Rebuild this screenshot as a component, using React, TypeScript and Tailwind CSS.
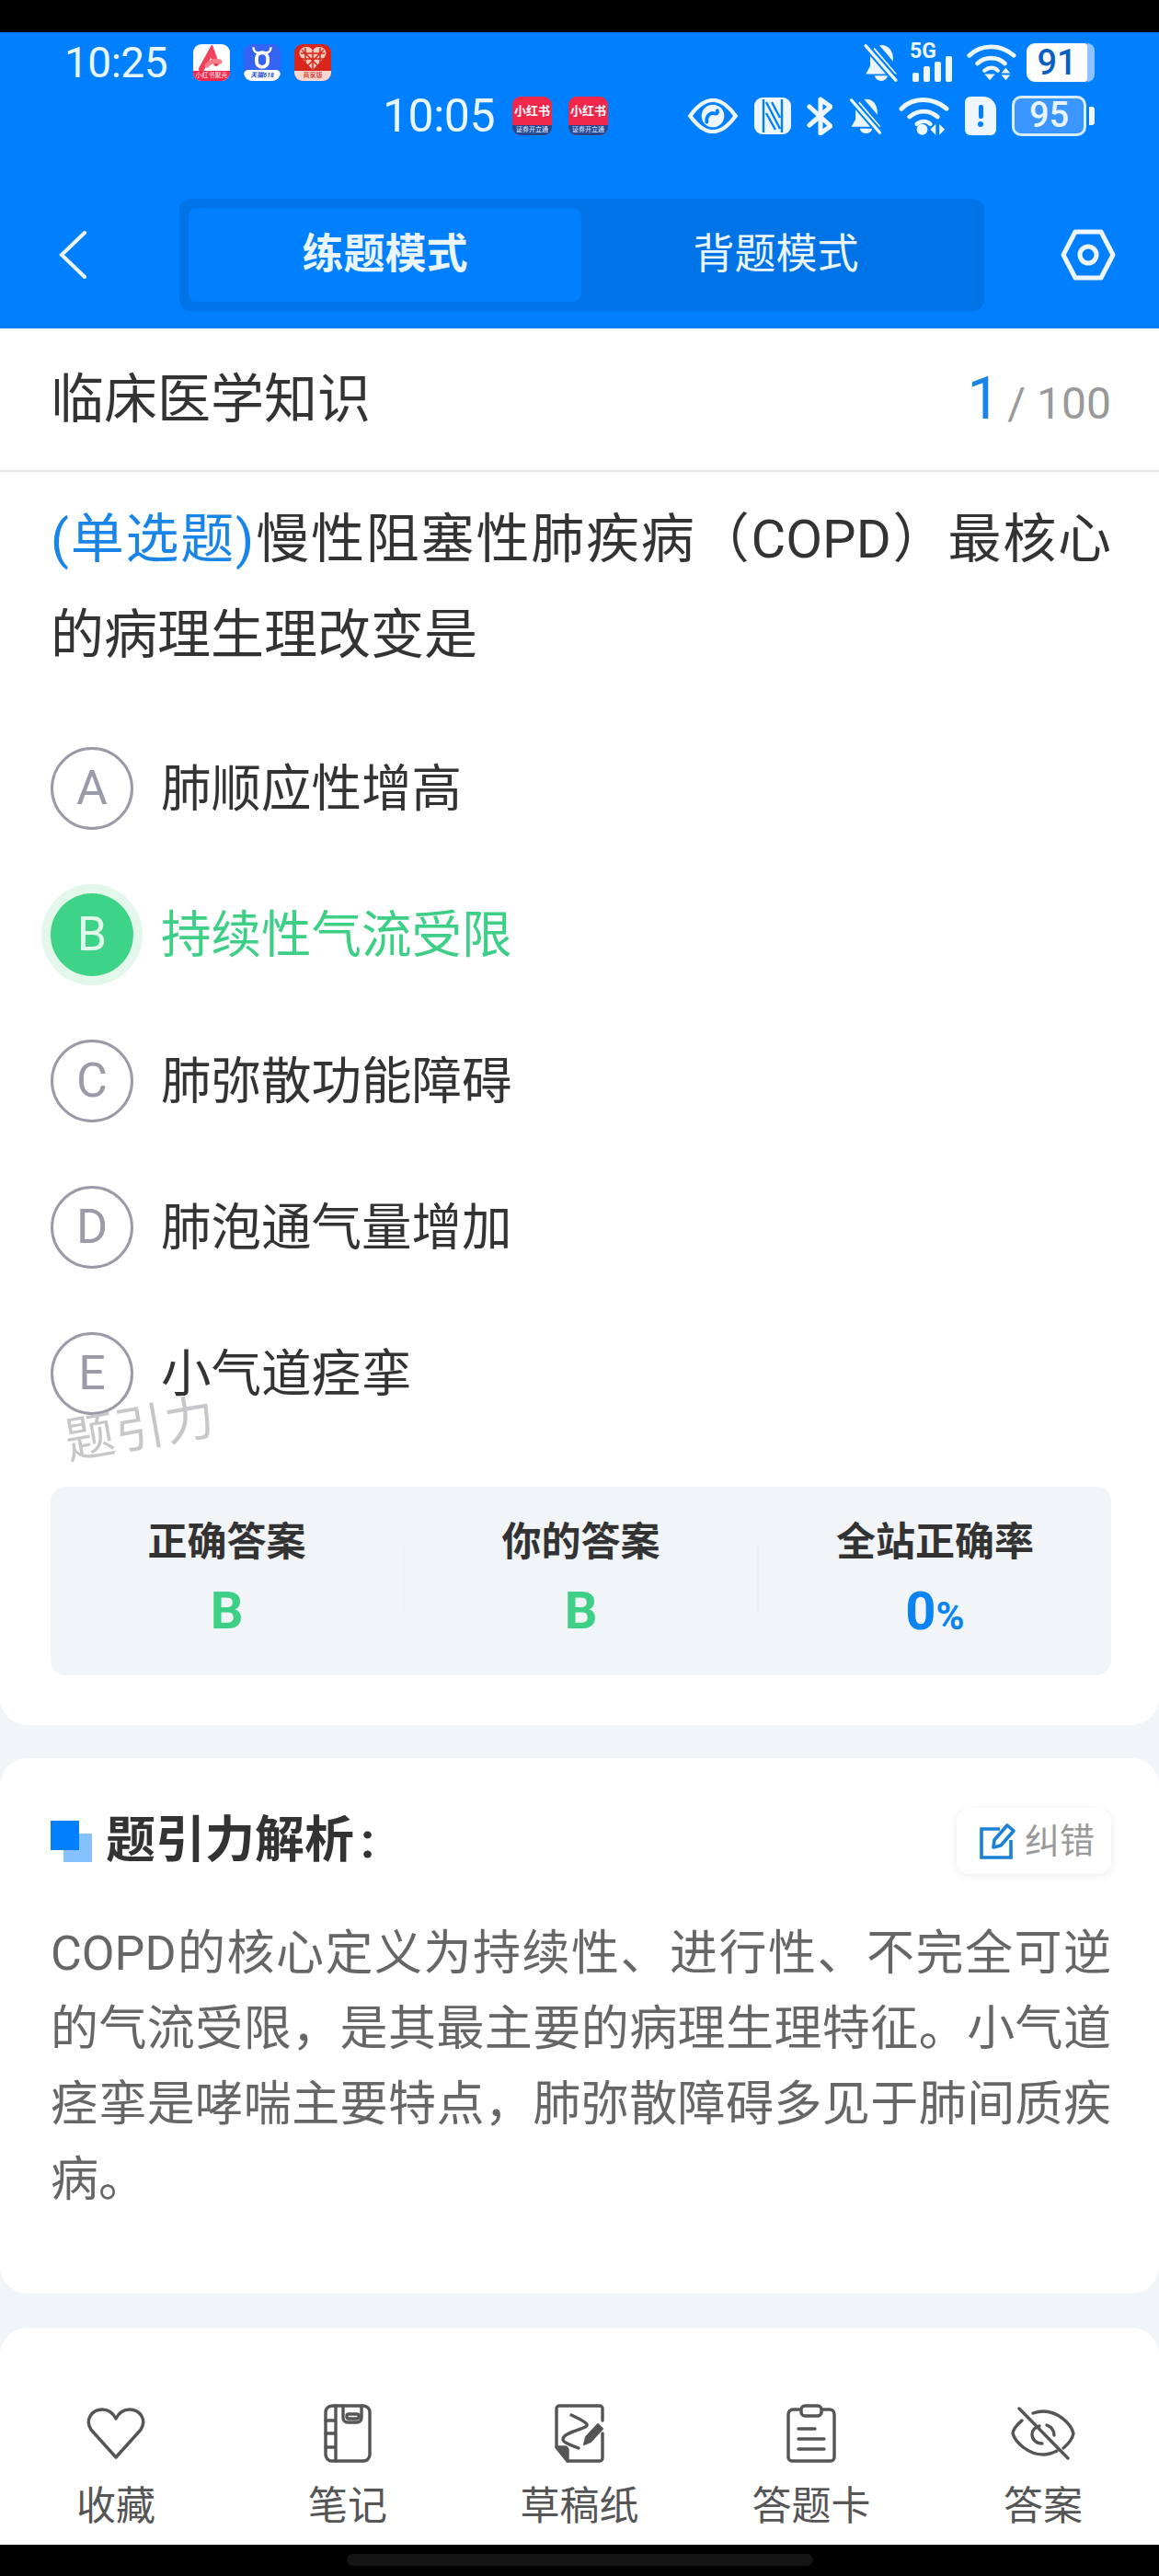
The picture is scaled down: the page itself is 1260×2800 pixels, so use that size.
import type { ReactNode } from 'react';

const SANS = "font-['Roboto','Noto_Sans_CJK_SC',sans-serif]";

function AppBadge({ bg, foot, footBg, footColor, children, size = 'w-10 h-10' }: {
  bg: string; foot: string; footBg: string; footColor: string; children: ReactNode; size?: string;
}) {
  return (
    <div className={`${size} ${bg} rounded-[9px] overflow-hidden flex flex-col`}>
      <div className="flex-1 flex items-center justify-center min-h-0">{children}</div>
      <div className={`h-[11px] ${footBg} ${footColor} text-[7px] leading-[11px] text-center whitespace-nowrap font-medium`}>{foot}</div>
    </div>
  );
}

function BellOff({ className }: { className: string }) {
  return (
    <svg viewBox="0 0 40 44" className={className} fill="#eef6ff">
      <path d="M21 2c8 0 13 7 13 15v9l5 9H3l5-9v-9C8 9 13 2 21 2Z" />
      <path d="M13 37h15c-1 4-4 6-7.500 6S14 41 13 37Z" />
      <path d="M10 -3l34 40" stroke="#0080ff" strokeWidth="6" />
      <path d="M4 4l33 38" stroke="#0080ff" strokeWidth="8" />
      <path d="M3 3l34 39" stroke="#eef6ff" strokeWidth="3.600" strokeLinecap="round" />
    </svg>
  );
}

function Wifi({ className, tail }: { className: string; tail: ReactNode }) {
  return (
    <svg viewBox="0 0 56 42" className={className} fill="none" stroke="#eef6ff" strokeLinecap="round">
      <path d="M3 13C16 0 38 0 53 13" strokeWidth="5" />
      <path d="M12 22c9-8 22-8 31 0" strokeWidth="5" />
      <path d="M20 30c5-4 11-4 15 0" strokeWidth="4.500" />
      {tail}
    </svg>
  );
}

function StatusTop() {
  return (
    <div className="h-[42px] mt-[12px] pl-[70px] pr-[70px] flex items-center">
      <span className="text-[46px] leading-[42px] text-[#eaf6ff] font-normal w-[140px] tracking-[-0.5px]">10:25</span>
      <div className="flex gap-[15px]">
        <AppBadge bg="bg-white" foot="小红书聚光" footBg="bg-[#f0264a]" footColor="text-[#ffd6dd]">
          <svg viewBox="0 0 32 28" className="w-[32px] h-[28px]" fill="none" strokeLinecap="round">
            <path d="M5 26 16 6l5 14" stroke="#f0405c" strokeWidth="6" />
            <path d="M11 22c5-5 9-6 14-4" stroke="#f77c8e" strokeWidth="5" />
          </svg>
        </AppBadge>
        <div className="w-10 h-10 bg-[#3563f4] rounded-[9px] overflow-hidden flex flex-col">
          <div className="flex-1 flex items-center justify-center min-h-0">
            <svg viewBox="0 0 30 28" className="w-[26px] h-[25px]" fill="none" stroke="white">
              <path d="M4 1c0 5 3 7 6 7h10c3 0 6-2 6-7" strokeWidth="2.800" />
              <rect x="8" y="8" width="14" height="18" rx="7" strokeWidth="4.500" />
            </svg>
          </div>
          <div className="h-[12px] bg-white rounded-t-[5px] text-[#2a4fd0] text-[7px] leading-[12px] text-center whitespace-nowrap font-bold italic">天猫618</div>
        </div>
        <AppBadge bg="bg-[#d8261c]" foot="商家版" footBg="bg-[#fbd9d2]" footColor="text-[#c8352b]">
          <svg viewBox="0 0 32 28" className="w-[32px] h-[28px]">
            <path d="M16 27 3 13C-1 7 4 1 10 2c3 0 5 2 6 4 1-2 3-4 6-4 6-1 11 5 7 11Z" fill="#f6c9bd" />
            <path d="M16 27V6M3 9h26M3 15h26M8 3v18M24 3v18M4 5l20 20M28 5 8 25" stroke="#d8261c" strokeWidth="1.500" />
          </svg>
        </AppBadge>
      </div>
      <div className="ml-auto flex items-center">
        <BellOff className="w-[39px] h-[42px]" />
        <div className="relative ml-[12px] w-[51px] h-[42px]">
          <span className="absolute left-0 top-[-3px] text-[23px] leading-[24px] font-bold text-[#eef6ff]">5G</span>
          <div className="absolute left-[3px] bottom-0 flex items-end gap-[5px]">
            <div className="w-[7px] h-[10px] rounded-[2px] bg-[#eef6ff]" />
            <div className="w-[7px] h-[17px] rounded-[2px] bg-[#eef6ff]" />
            <div className="w-[7px] h-[22px] rounded-[2px] bg-[#eef6ff]" />
            <div className="w-[7px] h-[28px] rounded-[2px] bg-[#eef6ff]" />
          </div>
        </div>
        <Wifi
          className="ml-[11px] w-[54px] h-[42px]"
          tail={<>
            <path d="M20 34h12l-6 7z" fill="#eef6ff" stroke="none" />
            <path d="M44 27l5 6H39zM44 41l5-6H39z" fill="#eef6ff" stroke="none" />
          </>}
        />
        <div className="ml-[11px] flex items-center">
          <div className="w-[66px] h-[42px] bg-white rounded-l-[9px] rounded-r-[3px] text-[#0a5fc4] text-[38px] leading-[42px] font-medium text-center">91</div>
          <div className="w-[8px] h-[42px] bg-[#8dc4ff] rounded-r-[8px]" />
        </div>
      </div>
    </div>
  );
}

function StatusSecond() {
  return (
    <div className="h-[44px] mt-[15px] pl-[416px] pr-[70px] flex items-center">
      <span className="text-[50px] leading-[44px] text-[#eaf6ff] w-[141px] tracking-[-0.5px]">10:05</span>
      <div className="flex gap-[18px]">
        {[0, 1].map(i => (
          <AppBadge key={i} size="w-[43px] h-[42px]" bg="bg-[#f0264a]" foot="证券开立通" footBg="bg-[#27478e]" footColor="text-[#cfe0ff]">
            <span className="text-white text-[13px] leading-[20px] font-bold">小红书</span>
          </AppBadge>
        ))}
      </div>
      <div className="ml-auto flex items-center gap-[17px]">
        <svg viewBox="0 0 56 40" className="w-[56px] h-[38px]" fill="none">
          <path d="M2 20C12 6 20 2 28 2s16 4 26 18C44 34 36 38 28 38S12 34 2 20Z" stroke="#eef6ff" strokeWidth="4.500" />
          <circle cx="28" cy="20" r="13" fill="#eef6ff" />
          <path d="M21 27c-1-7 4-11 8-10 3 1 5 0 4-3" stroke="#0080ff" strokeWidth="4" strokeLinecap="round" />
        </svg>
        <svg viewBox="0 0 40 40" className="w-[40px] h-[40px]">
          <rect width="40" height="40" rx="9" fill="#eef6ff" />
          <path d="M10 2v36M30 2v36M13 5l15 29M19 5l9 17M13 17l10 18" stroke="#0080ff" strokeWidth="2.400" fill="none" />
        </svg>
        <svg viewBox="0 0 28 42" className="w-[28px] h-[42px]" fill="none" stroke="#eef6ff" strokeWidth="5" strokeLinejoin="round" strokeLinecap="round">
          <path d="M3 11l23 21-11 8V3l11 8L3 31" />
        </svg>
        <BellOff className="w-[38px] h-[40px]" />
        <Wifi
          className="w-[55px] h-[42px]"
          tail={<>
            <circle cx="26" cy="36" r="6" fill="#eef6ff" stroke="none" />
            <path d="M41 30v12l-6-6zM45 30v12l6-6z" fill="#eef6ff" stroke="none" />
          </>}
        />
        <div className="w-[34px] h-[42px] bg-[#eef6ff] rounded-[6px] rounded-tr-[14px] flex flex-col items-center justify-center gap-[3px]">
          <div className="w-[5px] h-[15px] bg-[#0080ff] rounded-[2px]" />
          <div className="w-[6px] h-[6px] bg-[#0080ff] rounded-full" />
        </div>
        <div className="flex items-center">
          <div className="w-[81px] h-[44px] bg-[#3b96ff] border-[3px] border-[#d8ecff] rounded-[10px] text-[#eaf6ff] text-[38px] leading-[37px] font-medium text-center">95</div>
          <div className="ml-[3px] w-[6px] h-[20px] bg-[#eef6ff] rounded-r-[3px]" />
        </div>
      </div>
    </div>
  );
}

function NavBar() {
  return (
    <div className="mt-[68px] h-[122px] flex items-center pl-[64px] pr-[47px]">
      <svg viewBox="0 0 30 52" className="w-[30px] h-[52px]" fill="none" stroke="#eef6ff" strokeWidth="4" strokeLinecap="round">
        <path d="M28 2 3 26l25 24" />
      </svg>
      <div className="ml-[101px] w-[875px] h-[122px] bg-[#0074e6] rounded-[12px] p-[10px] flex items-stretch">
        <div className="w-[427px] bg-[#0080ff] rounded-[10px] flex items-center justify-center text-[#eaf6ff] text-[45px] font-bold">练题模式</div>
        <div className="flex-1 flex items-center justify-center text-[#eaf6ff] text-[45px] font-normal pr-[5px]">背题模式</div>
      </div>
      <svg viewBox="0 0 60 56" className="ml-auto w-[60px] h-[56px]" fill="none" stroke="#eef6ff" strokeWidth="5" strokeLinejoin="round">
        <path d="M16 3h28l13 25-13 25H16L3 28Z" />
        <circle cx="30" cy="28" r="9" />
      </svg>
    </div>
  );
}

function OptionRow({ letter, text, active }: { letter: string; text: string; active?: boolean }) {
  return (
    <div className="h-[90px] mb-[69px] flex items-center gap-[30px]">
      {active ? (
        <div className="w-[90px] h-[90px] rounded-full bg-[#3dd488] ring-[10px] ring-[#e3f7ec] flex items-center justify-center text-[#dff8ea] text-[52px] leading-none">{letter}</div>
      ) : (
        <div className="w-[90px] h-[90px] rounded-full border-[3px] border-[#9a9aa8] flex items-center justify-center text-[#9a9aa8] text-[52px] leading-none">{letter}</div>
      )}
      <span className={`text-[54.5px] leading-none ${active ? 'text-[#3dcf85]' : 'text-[#333333]'}`}>{text}</span>
    </div>
  );
}

function Stat({ label, children }: { label: string; children: ReactNode }) {
  return (
    <div className="flex-1 flex flex-col items-center">
      <div className="h-[50px] leading-[50px] text-[43px] font-bold text-[#333333]">{label}</div>
      <div className="mt-[25px] h-[50px] leading-[50px] font-bold">{children}</div>
    </div>
  );
}

function QuestionCard() {
  return (
    <div className="relative bg-white rounded-b-[30px] h-[1518px]">
      <div className="h-[156px] border-b-2 border-[#e8e8e8] pl-[55px] pr-[52px] flex items-center justify-between">
        <span className="text-[58px] leading-none text-[#333333]">临床医学知识</span>
        <span className="flex items-baseline">
          <span className="text-[64px] leading-none text-[#1a85e8] mr-[8px]">1</span>
          <span className="text-[48px] leading-none text-[#999999]">/ 100</span>
        </span>
      </div>
      <div className="pl-[55px] pr-[52px] pt-[21px]">
        <p className="text-[58px] leading-[104px] text-[#333333] text-justify">
          <span className="text-[#1a85e8]">(单选题)</span>慢性阻塞性肺疾病（COPD）最核心的病理生理改变是
        </p>
        <div className="mt-[70px]">
          <OptionRow letter="A" text="肺顺应性增高" />
          <OptionRow letter="B" text="持续性气流受限" active />
          <OptionRow letter="C" text="肺弥散功能障碍" />
          <OptionRow letter="D" text="肺泡通气量增加" />
          <OptionRow letter="E" text="小气道痉挛" />
        </div>
        <div className="mt-[78px] h-[205px] bg-[#f2f5f8] rounded-[16px] flex pt-[35px] relative">
          <Stat label="正确答案"><span className="text-[56px] text-[#3dcf85]">B</span></Stat>
          <div className="w-[2px] h-[74px] mt-[28px] bg-[#eef1f4]" />
          <Stat label="你的答案"><span className="text-[56px] text-[#3dcf85]">B</span></Stat>
          <div className="w-[2px] h-[74px] mt-[28px] bg-[#eef1f4]" />
          <Stat label="全站正确率">
            <span className="text-[58px] text-[#0a84f0]">0</span>
            <span className="text-[42px] text-[#0a84f0]">%</span>
          </Stat>
        </div>
      </div>
      <span className="absolute left-[70px] top-[1170px] -rotate-[10deg] text-[54px] leading-none text-[#b9b9be]/80 tracking-[1px]">题引力</span>
    </div>
  );
}

function AnalysisCard() {
  return (
    <div className="mt-[36px] h-[582px] bg-white rounded-[30px] pl-[55px] pr-[52px] pt-[54px]">
      <div className="h-[72px] flex items-center">
        <div className="relative w-[45px] h-[45px]">
          <div className="absolute right-0 bottom-0 w-[31px] h-[31px] bg-[#85c0ff]" />
          <div className="absolute left-0 top-0 w-[31px] h-[32px] bg-[#0080ff]" />
        </div>
        <span className="ml-[15px] text-[54px] leading-none font-bold text-[#333333]">题引力解析<span className="ml-[7px]">:</span></span>
        <div className="ml-auto w-[168px] h-[72px] rounded-[14px] bg-white shadow-[0_2px_10px_rgba(0,0,0,0.08)] flex items-center pl-[25px]">
          <svg viewBox="0 0 40 40" className="w-[40px] h-[40px]" fill="none" stroke="#1a80d8" strokeWidth="3.600">
            <path d="M22 7H2v31h32V19" />
            <path d="M15 27l1-8L30 3l7 6-14 16Z" strokeLinejoin="round" />
          </svg>
          <span className="ml-[9px] text-[38px] leading-none text-[#999999]">纠错</span>
        </div>
      </div>
      <p className="mt-[46px] text-[52px] leading-[82px] text-[#666666] text-justify">
        COPD的核心定义为持续性、进行性、不完全可逆的气流受限，是其最主要的病理生理特征。小气道痉挛是哮喘主要特点，肺弥散障碍多见于肺间质疾病。
      </p>
    </div>
  );
}

function TabItem({ label, children }: { label: string; children: ReactNode }) {
  return (
    <div className="w-[252px] flex flex-col items-center">
      <div className="h-[64px] flex items-center justify-center">{children}</div>
      <div className="mt-[26px] text-[43px] leading-[42px] text-[#555555]">{label}</div>
    </div>
  );
}

function BottomBar() {
  const stroke = { fill: 'none', stroke: '#555555', strokeWidth: 3.4, strokeLinejoin: 'round' as const, strokeLinecap: 'round' as const };
  return (
    <div className="mt-[37px] h-[236px] bg-white rounded-t-[30px] pt-[83px] flex justify-center">
      <TabItem label="收藏">
        <svg viewBox="0 0 64 56" className="w-[64px] h-[56px]" {...stroke}>
          <path d="M32 54 5 24C-2 13 6 2 17 2c7 0 12 4 15 10 3-6 8-10 15-10 11 0 19 11 12 22Z" />
        </svg>
      </TabItem>
      <TabItem label="笔记">
        <svg viewBox="0 0 52 64" className="w-[52px] h-[64px]" {...stroke}>
          <rect x="2" y="2" width="48" height="60" rx="7" />
          <path d="M13 2v60M2 18h11M2 32h11M2 47h11" />
          <path d="M21 2v13a5 5 0 0 0 5 5h10a5 5 0 0 0 5-5V2" />
          <rect x="25" y="11" width="13" height="5" rx="2" />
        </svg>
      </TabItem>
      <TabItem label="草稿纸">
        <svg viewBox="0 0 56 64" className="w-[56px] h-[64px]" {...stroke}>
          <path d="M15 62h35a3 3 0 0 0 3-3V32M53 18V5a3 3 0 0 0-3-3H6a3 3 0 0 0-3 3v42l12 15" />
          <path d="M3 47h9a3 3 0 0 1 3 3v12Z" fill="#555555" />
          <path d="M19 12c6 3 14 6 17 10 3 5-25 8-26 16-1 4 10 7 17 10" />
          <path d="M35 36 48 22l5 5-13 14-7 3Z" fill="#555555" strokeWidth="2" />
        </svg>
      </TabItem>
      <TabItem label="答题卡">
        <svg viewBox="0 0 54 64" className="w-[54px] h-[64px]" {...stroke}>
          <path d="M14 6H7a5 5 0 0 0-5 5v47a4 4 0 0 0 4 4h42a4 4 0 0 0 4-4V11a5 5 0 0 0-5-5h-7" />
          <rect x="16" y="2" width="22" height="11" rx="4" />
          <path d="M13 27h18M13 38h28M13 49h28" />
        </svg>
      </TabItem>
      <TabItem label="答案">
        <svg viewBox="0 0 70 58" className="w-[70px] h-[58px]" {...stroke}>
          <path d="M12 15C5 20 2 27 2 29c3 10 17 23 33 23 6 0 11-2 15-4M24 7c3-1 7-2 11-2 16 0 30 13 33 24-1 5-5 11-11 16" />
          <path d="M31 21c-4 1-8 4-8 9 0 6 5 10 11 10M39 20c5 2 8 6 8 11" />
          <path d="M9 2l53 54" />
        </svg>
      </TabItem>
    </div>
  );
}

export default function App() {
  return (
    <div className={`${SANS} w-[1260px] h-[2800px] bg-black overflow-hidden flex flex-col`}>
      <div className="h-[35px] shrink-0" />
      <div className="h-[322px] shrink-0 bg-[#0080ff]">
        <StatusTop />
        <StatusSecond />
        <NavBar />
      </div>
      <div className="h-[2408px] shrink-0 bg-[#f2f5f8]">
        <QuestionCard />
        <AnalysisCard />
        <BottomBar />
      </div>
      <div className="flex-1 flex items-center justify-center">
        <div className="w-[507px] h-[13px] rounded-full bg-[#151515]" />
      </div>
    </div>
  );
}
